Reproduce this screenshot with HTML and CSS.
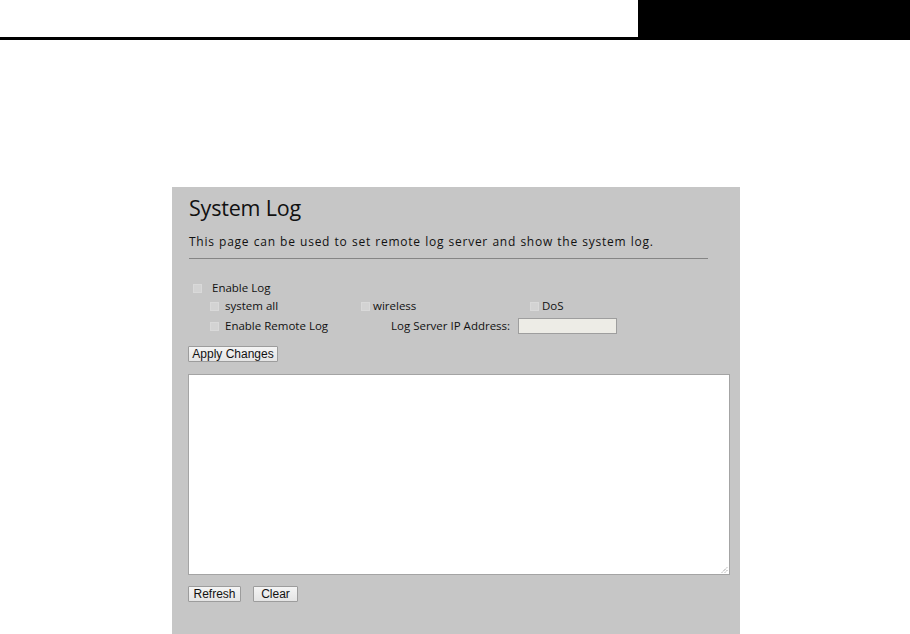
FILE: index.html
```html
<!DOCTYPE html>
<html>
<head>
<meta charset="utf-8">
<link rel="stylesheet" href="styles.css">
</head>
<body>
<div class="header">
  <div class="header-line"></div>
  <div class="header-box"></div>
</div>
<div class="panel">
  <h1 class="title">System Log</h1>
  <p class="desc">This page can be used to set remote log server and show the system log.</p>
  <div class="rule"></div>
  <div class="opt-main">
    <span class="cb cb-main"></span>
    <span class="lbl lbl-main">Enable Log</span>
  </div>
  <div class="opt-row">
    <div class="cell c1"><span class="cb"></span><span class="lbl lbl-a">system all</span></div>
    <div class="cell c2"><span class="cb"></span><span class="lbl lbl-b">wireless</span></div>
    <div class="cell c3"><span class="cb"></span><span class="lbl lbl-b">DoS</span></div>
  </div>
  <div class="opt-row row2">
    <div class="cell c1w"><span class="cb"></span><span class="lbl lbl-a">Enable Remote Log</span></div>
    <span class="lbl">Log Server IP Address:</span>
    <span class="ipbox"></span>
  </div>
  <button class="btn btn-apply">Apply Changes</button>
  <div class="logarea">
    <svg class="grip" width="7" height="7" viewBox="0 0 7 7"><path d="M1 6.5 L6.5 1 M4 6.5 L6.5 4" stroke="#777" stroke-width="1" stroke-dasharray="1 1"/></svg>
  </div>
  <div class="btn-row">
    <button class="btn btn-refresh">Refresh</button>
    <button class="btn btn-clear">Clear</button>
  </div>
</div>
</body>
</html>
```

FILE: styles.css
```css
html, body {
  margin: 0;
  padding: 0;
  background: #ffffff;
  height: 634px;
  overflow: hidden;
}
.header {
  display: flex;
  height: 40px;
}
.header-line {
  flex: 1;
  border-bottom: 3px solid #000;
}
.header-box {
  width: 272px;
  background: #000;
}
.panel {
  margin: 147px 0 0 172px;
  width: 568px;
  height: 447px;
  background: #c6c6c6;
  padding: 0 0 0 17px;
  box-sizing: border-box;
  font-family: "Open Sans", "Noto Sans", sans-serif;
  color: #111;
}
.title {
  margin: 0;
  padding-top: 7px;
  font-size: 21.5px;
  font-weight: normal;
  line-height: 28px;
  letter-spacing: -0.2px;
}
.desc {
  margin: 13px 0 0 0;
  font-size: 12px;
  line-height: 14px;
  letter-spacing: 0.75px;
  word-spacing: 0.5px;
  white-space: nowrap;
}
.rule {
  width: 519px;
  height: 1px;
  background: #858585;
  margin-top: 9px;
}
.cb {
  display: inline-block;
  width: 7px;
  height: 7px;
  background: #d3d3d3;
  border: 1px solid #d9d9d9;
  flex: none;
}
.lbl {
  font-size: 11.5px;
  line-height: 16px;
  white-space: nowrap;
}
.opt-main {
  display: flex;
  align-items: center;
  margin-top: 21px;
  padding-left: 4px;
  height: 16px;
}
.lbl-main { margin-left: 10px; }
.opt-row {
  display: flex;
  align-items: center;
  padding-left: 21px;
  height: 18px;
  margin-top: 1px;
}
.row2 { margin-top: 2px; }
.cell {
  display: flex;
  align-items: center;
}
.c1 { width: 151px; }
.c2 { width: 169px; }
.c1w { width: 181px; }
.lbl-a { margin-left: 6px; }
.lbl-b { margin-left: 3px; }
.ipbox {
  display: inline-block;
  width: 97px;
  height: 14px;
  margin-left: 8px;
  background: #edece6;
  border: 1px solid #9e9e9e;
}
.btn {
  font-family: "Liberation Sans", Arial, sans-serif;
  font-size: 12px;
  color: #111;
  background: linear-gradient(#f4f4f4, #e4e4e4);
  border: 1px solid #9c9c9c;
  border-radius: 1px;
  padding: 0;
  height: 16px;
  line-height: 14px;
  display: block;
}
.btn-apply {
  width: 90px;
  margin: 11px 0 0 -1px;
}
.logarea {
  position: relative;
  width: 542px;
  height: 201px;
  margin: 12px 0 0 -1px;
  background: #fff;
  border: 1px solid #a4a4a4;
  box-sizing: border-box;
}
.grip {
  position: absolute;
  right: 1px;
  bottom: 1px;
}
.btn-row {
  display: flex;
  gap: 12px;
  margin: 11px 0 0 -1px;
}
.btn-refresh { width: 53px; }
.btn-clear { width: 45px; }
```
